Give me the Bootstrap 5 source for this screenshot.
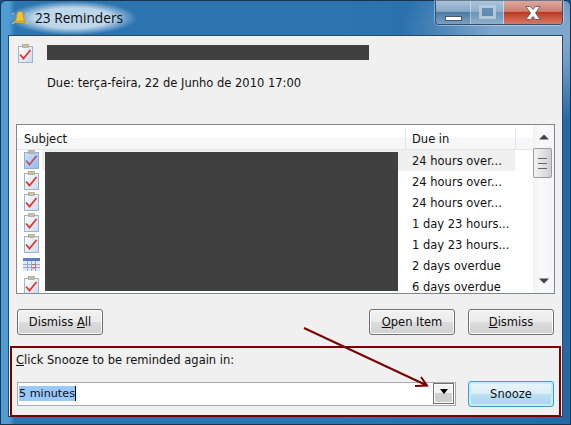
<!DOCTYPE html>
<html lang="en">
<head>
    <meta charset="UTF-8">
    <title>23 Reminders</title>
    <link href="https://cdn.jsdelivr.net/npm/bootstrap@5.3.0/dist/css/bootstrap.min.css" rel="stylesheet">
    <script src="https://cdn.jsdelivr.net/npm/bootstrap@5.3.0/dist/js/bootstrap.bundle.min.js"></script>
    <style>
        html, body { margin: 0; height: 425px; overflow: hidden; background: #1f4f7c; }
        body { font-family: "DejaVu Sans", sans-serif; font-size: 11.5px; color: #111; line-height: 14px; }
        .win-frame {
            position: relative; width: 571px; height: 425px; border: 1px solid #16344f; border-radius: 6px 6px 0 0;
            background: radial-gradient(ellipse 130px 90px at 530px 32px, #7fa6cd 30%, rgba(127,166,205,0) 100%),
                        linear-gradient(90deg, #4f9bd2 0, #4f9bd2 8px, #2c75b0 14px, #2c75b0 60%, #2568a6 100%);
            padding: 0 7px 7px 7px;
        }
        .title-bar { height: 34px; }
        .title-glow { height: 34px; padding: 0 14px 0 4px; margin-right: -14px; background: radial-gradient(ellipse closest-side, rgba(215,232,245,.85) 60%, rgba(215,232,245,0) 100%); }
        .title-text { font-family: "Open Sans", sans-serif; font-size: 13.7px; color: #0c0c0c; margin-left: 7px; margin-top: 2px; line-height: 30px; }
        .bell { margin-top: 9px; }
        .win-btns { height: 24px; border: 1px solid #33506e; border-top: 0; border-radius: 0 0 4px 4px; box-shadow: 0 0 0 1px rgba(255,255,255,.35); overflow: hidden; }
        .win-btn { display: flex; align-items: center; justify-content: center; height: 100%; border-right: 1px solid rgba(255,255,255,.45); }
        .btn-min { width: 35px; background: linear-gradient(#a9c3da 0%, #87a9c7 45%, #4b7ba5 50%, #7ba0c2 100%); }
        .btn-max { width: 33px; background: linear-gradient(#a9c3da 0%, #8fb0cc 45%, #6b95ba 50%, #8fb0cc 100%); }
        .btn-close-x { width: 58px; border-right: 0; background: linear-gradient(#dfa79f 0%, #cf7f72 45%, #bd3a22 50%, #d87a66 100%); }
        .min-bar { width: 17px; height: 5px; background: #fff; border: 1px solid #4a5a6a; margin-top: 11px; }
        .max-box { width: 17px; height: 14px; border: 3px solid #b9cde0; background: #5e88ad; opacity: .85; margin-top: -1px; }
        .client { height: 382px; border: 1px solid #274a69; background: #f0f0f0; padding: 0 7px; position: relative; }
        .head-row { height: 30px; }
        .head-icon { margin: 8px 0 0 2px; }
        .redact { background: #404040; }
        .redact-head { width: 322px; height: 15px; margin: 9px 0 0 14px; }
        .due-line { margin: 10px 0 0 31px; height: 14px; }
        .list-box { margin-top: 34px; height: 170px; background: #fff; border: 1px solid #828790; }
        .list-main { width: 516px; overflow: hidden; }
        .list-head { height: 25px; padding-top: 3px; border-bottom: 1px solid #e5e5e5; }
        .list-head > div { height: 21px; line-height: 23px; background: linear-gradient(#fff 50%, #f6f7f8 50%); border-right: 1px solid #e3e5e7; }
        .col-subject { width: 389px; padding-left: 7px; }
        .col-due { width: 110px; padding-left: 6px; }
        .col-rest { flex: 1; border-right: 0 !important; }
        .list-body { position: relative; height: 143px; overflow: hidden; }
        .list-row { height: 21px; line-height: 23px; }
        .row-icon { width: 25px; padding-left: 7px; height: 21px; flex: none; }
        .row-icon svg { display: block; }
        .row-icon svg.cal-icon { margin: 3px 0 0 -1px; }
        .row-gap { width: 364px; flex: none; }
        .row-due { width: 109px; padding-left: 6px; white-space: nowrap; flex: none; }
        .row-sel .row-gap, .row-sel .row-due { background: #f0f0f0; }
        .list-redact { position: absolute; left: 28px; top: 2px; width: 353px; height: 139px; z-index: 1; }
        .scroll-bar { width: 21px; background: linear-gradient(90deg, #f2f2f2, #f9f9f9 40%, #f5f5f5); }
        .scroll-arrow { height: 23px; flex: none; }
        .scroll-arrow-down { height: 24px; margin-top: auto; }
        .scroll-thumb { width: 19px; height: 30px; border: 1px solid #9a9a9a; border-radius: 2px; background: linear-gradient(90deg, #f4f4f4, #e2e2e2 50%, #cfcfcf); }
        .grip { width: 9px; height: 1px; background: #666; }
        .win-button {
            width: 86px; height: 26px; padding: 0; font-size: 11.5px; line-height: 22px; color: #111; border: 1px solid #707070; border-radius: 3px;
            background: linear-gradient(#f2f2f2 0%, #ebebeb 48%, #dddddd 50%, #cfcfcf 100%); box-shadow: inset 0 0 0 1px #fbfbfb;
        }
        .btn-row { margin-top: 15px; padding: 0 1px; }
        .dismiss-btn { margin-left: 13px; }
        .snooze-box { margin: 11px -6px 0 -6px; height: 71px; border: 2px solid #7a0000; padding: 4px 5px 0 5px; }
        .snooze-label { height: 14px; margin: 1px 0 0 -1px; }
        .snooze-controls { margin-top: 14px; }
        .combo { width: 439px; height: 24px; border: 1px solid #ababab; background: #fff; padding: 0 1px 0 1px; }
        .combo-value { background: #99c8fb; font-size: 11.2px; line-height: 15px; height: 15px; margin-top: 3px; border-right: 1px solid #000; }
        .combo-btn { width: 21px; height: 21px; border: 1px solid #6f6f6f; background: linear-gradient(#f2f2f2 48%, #cfcfcf 50%); box-shadow: inset 0 0 0 1px #fff; padding-bottom: 4px; }
        .combo-arrow { width: 0; height: 0; border-left: 4px solid transparent; border-right: 4px solid transparent; border-top: 5px solid #000; }
        .snooze-btn { border-color: #3c9fd0; background: linear-gradient(#e9f5fb 0%, #d9eef8 48%, #bde0f2 50%, #a8d6ee 100%); box-shadow: inset 0 0 0 2px #c5ecfb; }
        .mark-arrow { position: absolute; left: -1px; top: -1px; pointer-events: none; z-index: 2; }
    </style>
</head>
<body>
    <svg width="0" height="0" style="position:absolute">
        <defs>
            <linearGradient id="paper" x1="0" y1="0" x2="1" y2="1"><stop offset="0" stop-color="#ffffff"/><stop offset="1" stop-color="#c9d9ef"/></linearGradient>
            <linearGradient id="paperSel" x1="0" y1="0" x2="1" y2="1"><stop offset="0" stop-color="#d5e6fb"/><stop offset="1" stop-color="#8fb8ec"/></linearGradient>
            <symbol id="task" viewBox="0 0 15 19">
                <rect x="0.500" y="2.500" width="14" height="16" fill="url(#paper)" stroke="#9fb2cf"/>
                <rect x="4.500" y="0.500" width="6" height="3" fill="#c8c09a" stroke="#a39c78" stroke-width=".6"/>
                <path d="M2 10.500 L5.500 14.500 L12.500 6" fill="none" stroke="#e0392f" stroke-width="1.800"/>
            </symbol>
            <symbol id="task-sel" viewBox="0 0 15 19">
                <rect x="0.500" y="2.500" width="14" height="16" fill="url(#paperSel)" stroke="#8fb0dc"/>
                <rect x="4.500" y="0.500" width="6" height="3" fill="#b9bda6" stroke="#97a08c" stroke-width=".6"/>
                <path d="M2 10.500 L5.500 14.500 L12.500 6" fill="none" stroke="#b5566a" stroke-width="1.800"/>
            </symbol>
        </defs>
    </svg>

    <div class="win-frame">
        <div class="title-bar d-flex justify-content-between align-items-start">
            <div class="title-glow d-flex align-items-start">
                <svg class="bell" width="16" height="16" viewBox="0 0 16 16">
                    <path d="M0 3l2 1.500M16 3l-2 1.500M0 14l2-1.500M16 14l-2-1.500" stroke="#e8d68a" stroke-width="1"/>
                    <path d="M8 1.500c-2.500 0-3.200 1.800-3.200 4 0 2.600-.8 4-1.800 5.500h10c-1-1.500-1.800-2.900-1.800-5.500 0-2.200-.7-4-3.200-4z" fill="#f1c232" stroke="#b98d1a" stroke-width=".6"/>
                    <rect x="2" y="11" width="12" height="2" fill="#d6a726"/>
                </svg>
                <div class="title-text">23 Reminders</div>
            </div>
            <div class="win-btns d-flex">
                <div class="win-btn btn-min"><div class="min-bar"></div></div>
                <div class="win-btn btn-max"><div class="max-box"></div></div>
                <div class="win-btn btn-close-x">
                    <svg width="16" height="14" viewBox="0 0 16 14"><path d="M1 .5h4.500L8 3.500l2.500-3H15L10.500 7l4.500 6.500h-4.500L8 10.500l-2.500 3H1L5.500 7z" fill="#fff" stroke="#555" stroke-width=".8"/></svg>
                </div>
            </div>
        </div>

        <div class="client">
            <div class="head-row d-flex">
                <svg class="head-icon" width="15" height="19"><use href="#task"/></svg>
                <div class="redact redact-head"></div>
            </div>
            <div class="due-line">Due: terça-feira, 22 de Junho de 2010 17:00</div>

            <div class="list-box d-flex">
                <div class="list-main">
                    <div class="list-head d-flex">
                        <div class="col-subject">Subject</div>
                        <div class="col-due">Due in</div>
                        <div class="col-rest"></div>
                    </div>
                    <div class="list-body" id="rows">
                        <div class="redact list-redact"></div>
                    </div>
                </div>
                <div class="scroll-bar d-flex flex-column">
                    <div class="scroll-arrow d-flex align-items-center justify-content-center">
                        <svg width="10" height="6"><path d="M0 5.500 L5 .5 L10 5.500z" fill="#444"/></svg>
                    </div>
                    <div class="scroll-thumb d-flex flex-column align-items-center justify-content-center gap-1">
                        <div class="grip"></div><div class="grip"></div><div class="grip"></div>
                    </div>
                    <div class="scroll-arrow scroll-arrow-down d-flex align-items-center justify-content-center">
                        <svg width="10" height="6"><path d="M0 .5 L5 5.500 L10 .5z" fill="#444"/></svg>
                    </div>
                </div>
            </div>

            <div class="btn-row d-flex">
                <button class="btn win-button me-auto">Dismiss <u>A</u>ll</button>
                <button class="btn win-button"><u>O</u>pen Item</button>
                <button class="btn win-button dismiss-btn"><u>D</u>ismiss</button>
            </div>

            <div class="snooze-box">
                <div class="snooze-label"><u>C</u>lick Snooze to be reminded again in:</div>
                <div class="snooze-controls d-flex justify-content-between align-items-center">
                    <div class="combo d-flex justify-content-between">
                        <div><div class="combo-value">5 minutes</div></div>
                        <div class="combo-btn d-flex align-items-center justify-content-center"><div class="combo-arrow"></div></div>
                    </div>
                    <button class="btn win-button snooze-btn">Snooze</button>
                </div>
            </div>
        </div>

        <svg class="mark-arrow" width="571" height="425" viewBox="0 0 571 425">
            <path d="M304 328 L427 385.500 M421 377 L427 385.500 L415 386" fill="none" stroke="#7a0000" stroke-width="2"/>
        </svg>
    </div>

    <script>
        // list rows, the first one is the selected row
        const reminders = [
            ["task", "24 hours over..."], ["task", "24 hours over..."], ["task", "24 hours over..."],
            ["task", "1 day 23 hours..."], ["task", "1 day 23 hours..."], ["cal", "2 days overdue"], ["task", "6 days overdue"]
        ];
        const calIcon = '<svg class="cal-icon" width="17" height="13" viewBox="0 0 17 13"><rect width="17" height="13" fill="#dfe8f7"/><rect width="17" height="3" fill="#5b7fc7"/><path d="M0 6.500h17M0 9.500h17M4.500 3v10M8.500 3v10M12.500 3v10" stroke="#8fa9d8"/><path d="M9 6.500h3.500v3.500H9" fill="none" stroke="#e0605a"/></svg>';
        const rows = document.getElementById("rows");
        reminders.forEach((r, i) => {
            const taskIcon = `<svg width="15" height="19"><use href="#${i === 0 ? "task-sel" : "task"}"/></svg>`;
            const row = document.createElement("div");
            row.className = "list-row d-flex" + (i === 0 ? " row-sel" : "");
            row.innerHTML = `<div class="row-icon">${r[0] === "cal" ? calIcon : taskIcon}</div><div class="row-gap"></div><div class="row-due">${r[1]}</div>`;
            rows.appendChild(row);
        });
    </script>
</body>
</html>
